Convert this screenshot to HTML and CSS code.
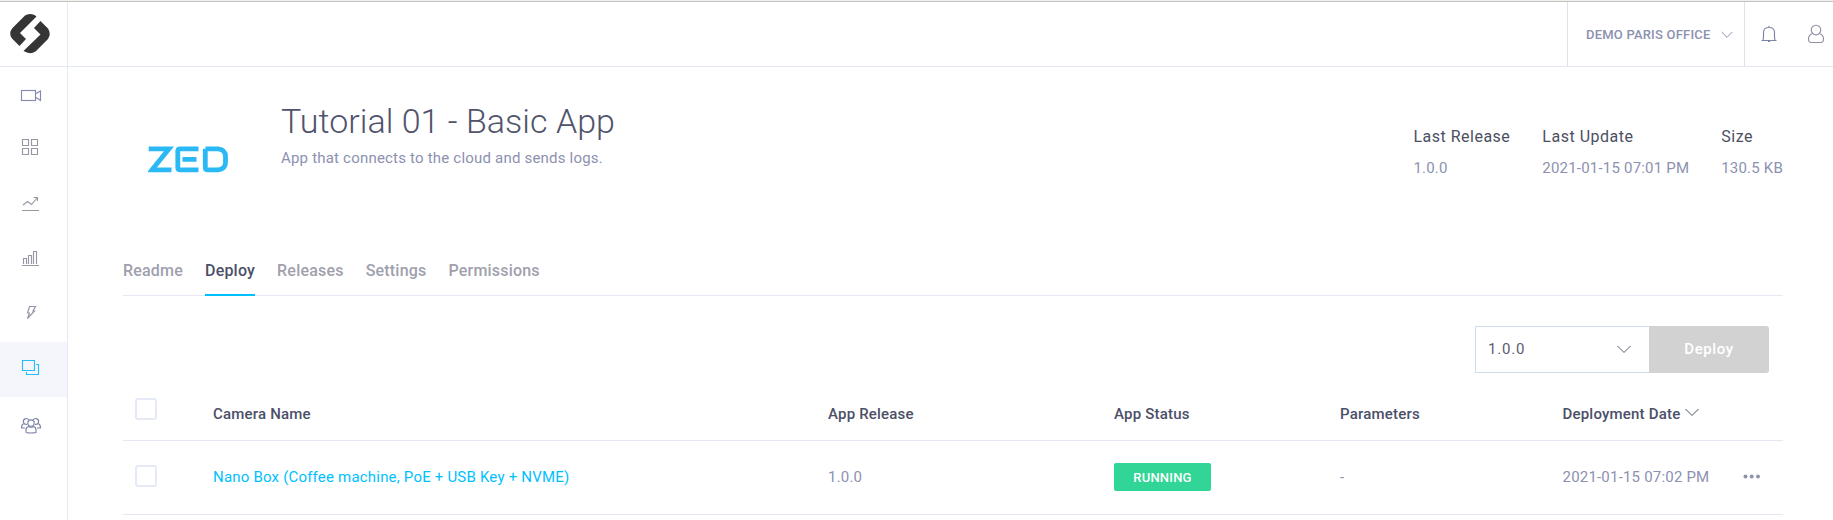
FILE: index.html
```html
<!DOCTYPE html>
<html lang="en">
<head>
<meta charset="utf-8">
<title>Tutorial 01 - Basic App</title>
<link rel="stylesheet" href="styles.css">
</head>
<body>
<div class="app">
  <aside class="sidebar">
    <a class="brand" href="#" aria-label="Home">
      <svg width="67" height="64" viewBox="0 0 67 64"><path fill="#353535" d="M25 13.500Q27 12 30 12C33 12 35 13 36.500 14.500L20 31L26 37L19.500 44L12 36.500Q8 31.500 12.500 26ZM40.500 19L48 26.500Q51.500 32 48 37L35.500 49.500Q30 53 23.500 49L40.500 32.500L34 26Z"/></svg>
    </a>
    <nav class="side-nav">
      <a href="#" class="item" aria-label="Cameras"><svg viewBox="0 0 67 55"><rect x="21.500" y="23.500" width="14" height="10"/><path d="M36 26.500L40.500 24V33.500L36 30.500"/></svg></a>
      <a href="#" class="item gray" aria-label="Workspaces"><svg viewBox="0 0 67 55"><path d="M22.500 17.500h6v6h-6zM31.500 17.500h6v6h-6zM22.500 26.500h6v6h-6zM31.500 26.500h6v6h-6z"/></svg></a>
      <a href="#" class="item gray" aria-label="Analytics"><svg viewBox="0 0 67 55"><path d="M22 33.500H39M23 28L27.500 24.500L31.500 27.500L37 21M33.500 20.500H37.500V24"/></svg></a>
      <a href="#" class="item gray" aria-label="Reports"><svg viewBox="0 0 67 55"><path d="M22 33.500H39M23.500 32V26.500H26.500V32M28.500 32V23.500H31.500V32M33.500 32V19.500H36.500V32"/></svg></a>
      <a href="#" class="item bolt" aria-label="Events"><svg viewBox="0 0 67 55"><path d="M29.500 19.500H35.500L33 24H34.500L27.500 31.500L29.500 26H27.500Z"/></svg></a>
      <a href="#" class="item active" aria-label="Applications"><svg viewBox="0 0 67 55"><path d="M22.500 18.500h12v10h-12zM36 22.500h2.500v10h-12v-2.500"/></svg></a>
      <a href="#" class="item people" aria-label="Users"><svg viewBox="0 0 67 55"><circle cx="31" cy="26" r="3.200"/><path d="M26 35.500V33Q26 30 28.500 29.500Q31 31 33.500 29.500Q36 30 36 33V35.500Q31 36.500 26 35.500M27 27.300A2.900 2.900 0 1 1 28.800 23M33.200 23A2.900 2.900 0 1 1 35 27.300M23.600 26.800Q21.500 27.500 21.500 31H25M38.400 26.800Q40.500 27.500 40.500 31H37"/></svg></a>
    </nav>
  </aside>
  <div class="main">
    <header class="topbar">
      <div class="workspace"><span>DEMO PARIS OFFICE</span>
        <svg width="12" height="8" viewBox="0 0 12 8"><path d="M.7 1L6 6.300L11.300 1"/></svg>
      </div>
      <svg class="bell" width="16" height="18" viewBox="0 0 16 18"><path d="M.500 15.500H15.500M2 15.500L2.500 12V7.500Q2.500 2.500 8 2.500Q13.500 2.500 13.500 7.500V12L14 15.500M8 .800V2.500M7 16.500H9"/></svg>
      <svg class="user" width="18" height="20" viewBox="0 0 18 20"><circle cx="9" cy="6" r="4.800"/><path d="M5.500 9.500Q1.500 11 1.500 15Q1.500 18.500 4.500 18.500H13.500Q16.500 18.500 16.500 15Q16.500 11 12.500 9.500"/></svg>
    </header>
    <main class="content">
      <section class="hero">
        <svg class="zed" width="83" height="27" viewBox="0 0 83 27" role="img" aria-label="ZED"><path d="M.700 2.800H21L4 23.800H23.500M50.500 2.800H32Q29.800 2.800 29.800 5V21.500Q29.800 23.800 32 23.800H50.500M34.500 13.300H48.500M57.500 2.800H70Q77.500 3.500 77.500 10.500V16.500Q77.500 23 70 23.800H59.500Q57.300 23.800 57.300 21.500V2.800"/></svg>
        <div class="intro">
          <h1>Tutorial 01 - Basic App</h1>
          <p>App that connects to the cloud and sends logs.</p>
        </div>
        <dl class="facts">
          <div><dt>Last Release</dt><dd>1.0.0</dd></div>
          <div><dt>Last Update</dt><dd>2021-01-15 07:01 PM</dd></div>
          <div><dt>Size</dt><dd>130.5 KB</dd></div>
        </dl>
      </section>
      <nav class="tabs">
        <a href="#">Readme</a><a href="#" class="current">Deploy</a><a href="#">Releases</a><a href="#">Settings</a><a href="#">Permissions</a>
      </nav>
      <div class="actions">
        <div class="select"><span>1.0.0</span><svg width="14" height="9" viewBox="0 0 14 9"><path d="M.500 1L7 7.500L13.500 1"/></svg></div>
        <button class="deploy" disabled>Deploy</button>
      </div>
      <div class="table">
        <div class="row head">
          <i class="check"></i><span>Camera Name</span><span>App Release</span><span>App Status</span><span>Parameters</span>
          <span class="sort">Deployment Date<svg width="14" height="9" viewBox="0 0 14 9"><path d="M.500 1L7 7.500L13.500 1"/></svg></span>
        </div>
        <div class="row">
          <i class="check"></i><a href="#" class="camera">Nano Box (Coffee machine, PoE + USB Key + NVME)</a><span>1.0.0</span><span class="badge">RUNNING</span><span>-</span><span class="date">2021-01-15 07:02 PM</span>
          <svg class="more" width="18" height="5" viewBox="0 0 18 5"><circle cx="2.500" cy="2.500" r="2"/><circle cx="8.700" cy="2.500" r="2"/><circle cx="15" cy="2.500" r="2"/></svg>
        </div>
      </div>
    </main>
  </div>
</div>
</body>
</html>
```
FILE: styles.css
```css
* { box-sizing: border-box; }
body { margin: 0; background: #fff; color: #8c91b0; font: 15px/20px Roboto, sans-serif; letter-spacing: .2px; }
a { color: inherit; text-decoration: none; }
svg { display: block; flex: none; fill: none; stroke: currentColor; }
.app { display: flex; height: 520px; overflow: hidden; border-top: 1px solid #f0efee; box-shadow: inset 0 1px #c6c3c0; }
.sidebar { flex: none; width: 68px; border-right: 1px solid #e6e8f3; margin-top: 1px; }
.brand { display: block; height: 65px; border-bottom: 1px solid #e3e9f4; }
.brand svg { stroke: none; }
.item { display: block; height: 55px; color: #858bac; }
.item svg { width: 67px; height: 55px; stroke-width: 1.15; }
.gray { color: #9797a6; }
.bolt { color: #9895aa; }
.people { color: #7d83a5; }
.active { color: #25bdfb; background: #f4f6fb; }
.main { flex: 1; min-width: 0; margin-top: 1px; }
.topbar { display: flex; align-items: center; height: 65px; border-bottom: 1px solid #e3e9f4; justify-content: flex-end; padding-right: 8px; }
.workspace { display: flex; align-items: center; width: 178px; height: 64px; padding: 0 11px 0 18px; justify-content: space-between; border: solid #dfe2ea; border-width: 0 1px; font-size: 13px; font-weight: 500; white-space: nowrap; }
.workspace span { margin-top: 1px; }
.workspace svg { margin-top: 2px; }
.bell { margin-left: 16px; color: #7d83a5; stroke-width: 1.15; }
.user { margin-left: 30px; color: #8f91a2; stroke-width: 1.15; }
.content { padding: 0 50px 0 55px; }
.hero { display: flex; height: 179px; padding-left: 24px; }
.zed { margin: 79px 50px 0 1px; color: #2bb9f6; stroke-width: 4.8; }
.intro { padding-top: 33px; white-space: nowrap; }
h1 { margin: 0; font-size: 34px; line-height: 42px; font-weight: 300; color: #50536b; letter-spacing: .04px; }
.intro p { margin: 6px 0 0; }
.facts { display: flex; gap: 32px; margin: 60px 0 0 auto; white-space: nowrap; }
dt { color: #4c4f62; font-size: 16px; letter-spacing: .5px; }
dd { margin: 11px 0 0; }
.tabs { display: flex; gap: 22px; height: 50px; border-bottom: 1px solid #e6e8f3; font-size: 16px; font-weight: 500; color: #a0a0ad; }
.tabs a { height: 50px; padding-top: 15px; }
.tabs .current { color: #4c4f68; border-bottom: 2px solid #00bfff; }
.actions { display: flex; justify-content: flex-end; padding: 30px 14px 0 0; }
.select { display: flex; align-items: center; justify-content: space-between; width: 174px; height: 47px; padding: 0 18px 2px 12px; border: 1px solid #cfdcf0; border-right: 0; color: #595c70; letter-spacing: .8px; }
.select svg { margin-top: 2px; }
.deploy { width: 120px; height: 47px; padding: 0 0 2px; border: 0; border-radius: 0 3px 3px 0; background: #d2d2d2; color: #fff; font: 500 15px/20px Roboto, sans-serif; letter-spacing: .6px; }
.row { display: grid; grid-template-columns: 90px 615px 286px 226px 222.500px 180.500px 1fr; height: 74px; padding-bottom: 2px; align-items: center; border-bottom: 1px solid #e3e8f4; white-space: nowrap; }
.head { height: 68px; padding: 14px 0 0; color: #4c4f68; font-weight: 500; }
.check { width: 22px; height: 22px; margin: -2px 0 0 12px; border: 2px solid #e6eaf7; border-radius: 3px; }
.head .check { margin-top: -10px; }
.camera { color: #00bfff; }
.badge { width: 97px; height: 28px; border-radius: 2px; background: #31d696; color: #fff; font-size: 13px; font-weight: 500; line-height: 29px; text-align: center; }
.sort { display: flex; gap: 5px; align-items: center; }
.sort svg { margin-top: -3px; }
.more { fill: #8f92a8; stroke: none; }
```
